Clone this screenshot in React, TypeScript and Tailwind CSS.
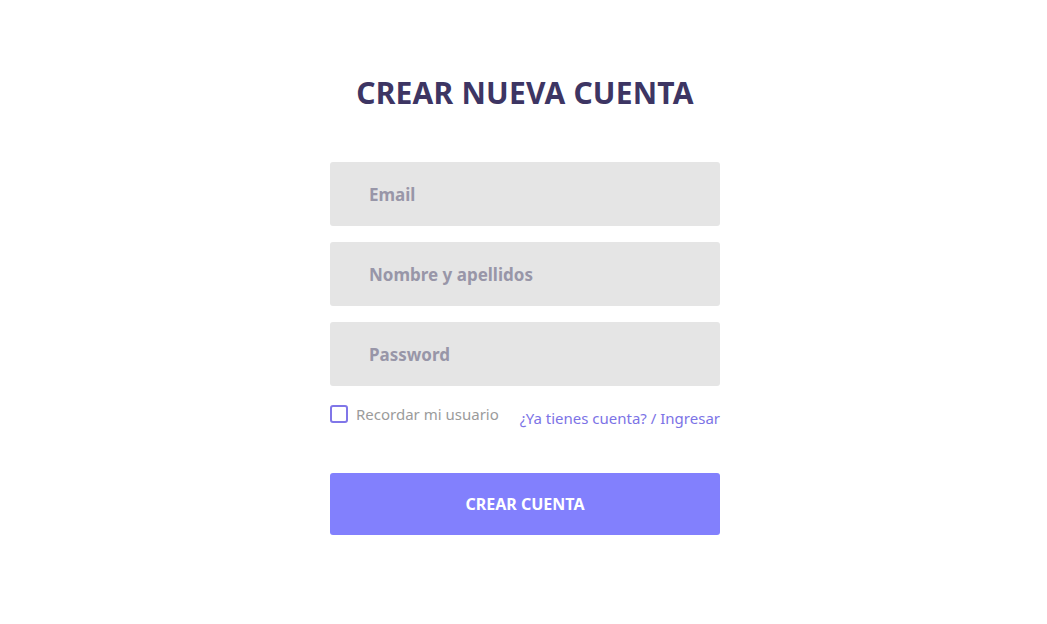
import React from "react";

const font = { fontFamily: '"Noto Sans", "Open Sans", sans-serif' };

export default function App() {
  return (
    <div className="min-h-screen w-full bg-white pl-[3px]" style={font}>
      <div className="mx-auto flex w-[390px] flex-col pt-[72px]">
        <h1 className="text-center text-[30px] leading-[42px] font-bold tracking-[0.2px] text-[#3d3563]">
          CREAR NUEVA CUENTA
        </h1>

        <form className="mt-[48px] flex flex-col gap-4">
          {["Email", "Nombre y apellidos", "Password"].map((p) => (
            <input
              key={p}
              type={p === "Password" ? "password" : "text"}
              placeholder={p}
              className="h-16 w-full rounded-[3px] bg-[#e5e5e5] pl-[39px] text-[17px] font-bold text-[#4a4a5a] outline-none placeholder:text-[#9896a8]"
            />
          ))}

          <div className="mt-[1px] flex items-start justify-between">
            <label className="flex items-center gap-2 text-[15px] text-[#9b9b9b]">
              <span className="h-[18px] w-[18px] rounded-[3px] border-2 border-[#8076e8]" />
              Recordar mi usuario
            </label>
            <a href="#" className="mt-[4px] text-[15px] text-[#7c73e6]">
              ¿Ya tienes cuenta? / Ingresar
            </a>
          </div>

          <button
            type="button"
            className="mt-[27px] h-[62px] w-full rounded-[3px] bg-[#8280fd] text-[16px] font-bold text-white"
          >
            CREAR CUENTA
          </button>
        </form>
      </div>
    </div>
  );
}
